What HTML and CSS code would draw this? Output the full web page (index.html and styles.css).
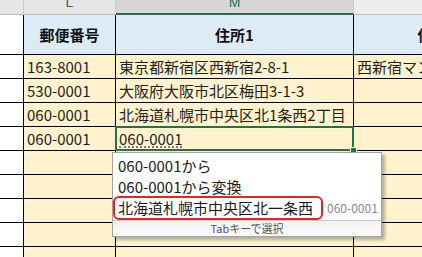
FILE: index.html
```html
<!DOCTYPE html>
<html lang="ja">
<head>
<meta charset="utf-8">
<link rel="stylesheet" href="styles.css">
</head>
<body>
<div class="wrap">
  <div class="sheet">
    <div class="ch corner"></div>
    <div class="ch"><span class="letter">L</span></div>
    <div class="ch sel"><span class="letter">M</span></div>
    <div class="ch"><span class="letter">N</span></div>

    <div class="rh"></div>
    <div class="th">郵便番号</div>
    <div class="th">住所1</div>
    <div class="th">住所2</div>

    <div class="rh"></div>
    <div class="td">163-8001</div>
    <div class="td">東京都新宿区西新宿2-8-1</div>
    <div class="td">西新宿マンション101</div>

    <div class="rh"></div>
    <div class="td">530-0001</div>
    <div class="td">大阪府大阪市北区梅田3-1-3</div>
    <div class="td"></div>

    <div class="rh"></div>
    <div class="td">060-0001</div>
    <div class="td">北海道札幌市中央区北1条西2丁目</div>
    <div class="td"></div>

    <div class="rh"></div>
    <div class="td">060-0001</div>
    <div class="td active"><span class="ime">060-0001</span></div>
    <div class="td"></div>

    <div class="rh"></div><div class="td"></div><div class="td"></div><div class="td"></div>
    <div class="rh"></div><div class="td"></div><div class="td"></div><div class="td"></div>
    <div class="rh"></div><div class="td"></div><div class="td"></div><div class="td"></div>
    <div class="rh"></div><div class="td"></div><div class="td"></div><div class="td"></div>
    <div class="rh"></div><div class="td"></div><div class="td"></div><div class="td"></div>
  </div>

  <div class="suggest">
    <div class="items">
      <div class="item">060-0001から</div>
      <div class="item">060-0001から変換</div>
      <div class="item hit"><span class="hitbox">北海道札幌市中央区北一条西</span><span class="zip">060-0001</span></div>
    </div>
    <div class="foot">Tabキーで選択</div>
  </div>
</div>
</body>
</html>
```

FILE: styles.css
```css
html, body {
  margin: 0;
  padding: 0;
  background: #ffffff;
  overflow: hidden;
}

.wrap {
  position: relative;
  width: 422px;
  height: 257px;
  overflow: hidden;
  font-family: "Noto Sans CJK JP", "Noto Sans", sans-serif;
  color: #1a1a1a;
}

.sheet {
  display: grid;
  grid-template-columns: 24px 92px 238px 167px;
  grid-template-rows: 15px 40px repeat(9, 24px);
  width: 521px;
}

.sheet > div {
  box-sizing: border-box;
  overflow: hidden;
  white-space: nowrap;
}

.ch {
  background: #e6e6e6;
  border-right: 1px solid #cacaca;
  border-bottom: 1px solid #bdbdbd;
  text-align: center;
  font-family: "Liberation Sans", "Noto Sans", sans-serif;
  font-size: 14px;
  line-height: 14px;
  color: #555555;
}

.ch .letter {
  display: block;
  margin-top: -5px;
}

.ch.corner {
  background: #e6e6e6;
}

.ch.sel {
  background: #d6d6d6;
  border-bottom: 2px solid #217346;
  color: #217346;
}

.ch:nth-child(4) {
  background: #eeeeee;
}

.rh {
  background: #ffffff;
  border-right: 1px solid #000000;
  border-bottom: 1px solid #000000;
}

.th {
  background: #ddebf7;
  border-right: 1px solid #000000;
  border-bottom: 1px solid #000000;
  font-weight: bold;
  font-size: 15px;
  line-height: 39px;
  text-align: center;
  color: #111111;
}

.td {
  background: #fff2cc;
  border-right: 1px solid #000000;
  border-bottom: 1px solid #000000;
  font-size: 15px;
  line-height: 23px;
  padding-left: 3px;
  color: #1f1f1f;
}

.td.active {
  position: relative;
  overflow: visible !important;
}

.td.active::after {
  content: "";
  position: absolute;
  top: -1px;
  left: -1px;
  right: -1px;
  bottom: -1px;
  border: 2px solid #217346;
  pointer-events: none;
}

.td.active::before {
  content: "";
  position: absolute;
  right: -4px;
  bottom: -4px;
  width: 5px;
  height: 5px;
  background: #217346;
  border: 1px solid #ffffff;
  z-index: 2;
}

.ime {
  display: inline-block;
  line-height: 14px;
  border-bottom: 2px dotted #7a7a7a;
}

.suggest {
  position: absolute;
  left: 112px;
  top: 152px;
  width: 270px;
  box-sizing: border-box;
  background: #ffffff;
  border: 1px solid #a3a3a3;
  box-shadow: 3px 3px 3px rgba(0, 0, 0, 0.28);
  z-index: 5;
}

.items {
  padding-top: 2px;
  padding-bottom: 2px;
}

.item {
  height: 21px;
  line-height: 21px;
  font-size: 15px;
  padding-left: 5px;
  color: #1a1a1a;
  white-space: nowrap;
}

.item.hit {
  padding-left: 0;
  display: flex;
  align-items: center;
}

.hitbox {
  box-sizing: border-box;
  height: 24px;
  line-height: 20px;
  padding: 0 8px 0 3px;
  border: 2px solid #e0242c;
  border-radius: 6px;
}

.zip {
  margin-left: 4px;
  font-size: 12px;
  color: #8a8a8a;
}

.foot {
  border-top: 1px solid #c9c9c9;
  height: 15px;
  line-height: 15px;
  font-size: 11px;
  text-align: center;
  color: #555555;
  background: linear-gradient(#f2f2f2, #fafafa);
}
```
